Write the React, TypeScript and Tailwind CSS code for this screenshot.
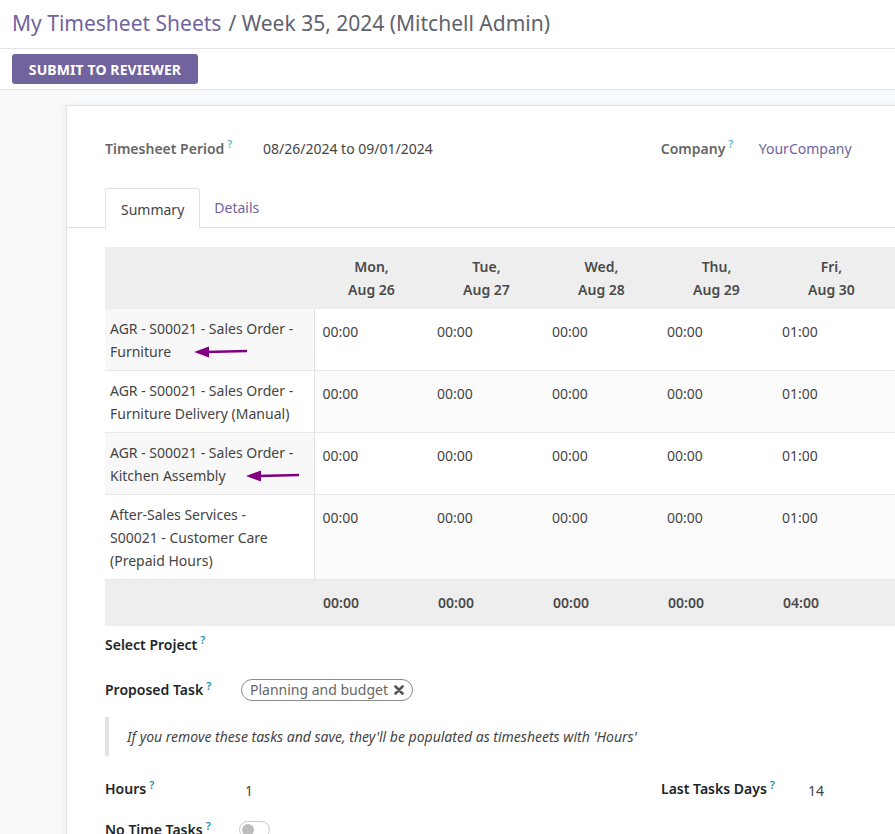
import React from 'react';

const days = [
  ['Mon,', 'Aug 26'],
  ['Tue,', 'Aug 27'],
  ['Wed,', 'Aug 28'],
  ['Thu,', 'Aug 29'],
  ['Fri,', 'Aug 30'],
];

const rows = [
  { name: ['AGR - S00021 - Sales Order -', 'Furniture'], arrow: 'a' },
  { name: ['AGR - S00021 - Sales Order -', 'Furniture Delivery (Manual)'] },
  { name: ['AGR - S00021 - Sales Order -', 'Kitchen Assembly'], arrow: 'b' },
  { name: ['After-Sales Services -', 'S00021 - Customer Care', '(Prepaid Hours)'] },
];

const values = ['00:00', '00:00', '00:00', '00:00', '01:00'];
const totals = ['00:00', '00:00', '00:00', '00:00', '04:00'];

function Help({ light }: { light?: boolean }) {
  return (
    <sup className={`ml-[3px] text-[11px] font-semibold ${light ? 'text-[#5fb6cc]' : 'text-[#2a8fb0]'}`}>?</sup>
  );
}

function Arrow({ width }: { width: number }) {
  return (
    <svg width={width} height="12" viewBox={`0 0 ${width} 12`} className="inline-block">
      <line x1="12" y1="6" x2={width} y2="5" stroke="#800080" strokeWidth="2.5" />
      <polygon points="0,6 15,0.5 15,11.5" fill="#800080" />
    </svg>
  );
}

export default function App() {
  return (
    <div className="h-[834px] overflow-hidden bg-[#f8f9fa] text-[14px] text-[#444]" style={{ fontFamily: '"Noto Sans", "Open Sans", sans-serif' }}>
      <div className="bg-white">
        <div className="h-[49px] border-b border-[#e3e3e3] px-3 flex items-center text-[21px]">
          <span className="text-[#71639e]">My Timesheet Sheets</span>
          <span className="text-[#5f636e] ml-[7px]">/ Week 35, 2024 (Mitchell Admin)</span>
        </div>
        <div className="h-[41px] border-b border-[#e3e3e3] px-3 flex items-center">
          <button className="h-[30px] w-[186px] rounded-[3px] bg-[#71639e] text-white text-[14px] font-bold uppercase tracking-[0.1px]">
            Submit to Reviewer
          </button>
        </div>
      </div>

      <div className="pl-[66px] pt-[15px]">
        <div className="min-w-[900px] bg-white border-l border-t border-[#e0e2e6] shadow-[-2px_0_6px_rgba(0,0,0,0.04)]">
          <div className="pl-[38px] pt-[30px] flex items-center h-[54px]">
            <div className="w-[158px] font-semibold text-[#666]">
              Timesheet Period<Help light />
            </div>
            <div className="text-[#444]">08/26/2024 to 09/01/2024</div>
            <div className="ml-[228px] w-[98px] font-semibold text-[#666]">
              Company<Help light />
            </div>
            <div className="text-[#71639e]">YourCompany</div>
          </div>

          <div className="mt-[28px] border-b border-[#dee2e6] pl-[38px] flex h-[40px]">
            <div className="-mb-px h-[41px] px-[15px] flex items-center border border-b-0 border-[#dee2e6] rounded-t-[3px] bg-white text-[#444]">
              Summary
            </div>
            <div className="px-[14px] flex items-center text-[#71639e]">Details</div>
          </div>

          <div className="pl-[38px] pt-[19px]">
            <table className="border-collapse table-fixed w-[800px]">
              <colgroup>
                <col className="w-[209px]" />
                {days.map((_, i) => (
                  <col key={i} className="w-[115px]" />
                ))}
                <col className="w-[16px]" />
              </colgroup>
              <thead>
                <tr className="bg-[#eeeeee] h-[62px]">
                  <th></th>
                  {days.map((d, i) => (
                    <th key={i} className="text-center font-semibold text-[#4a4a4a] leading-[23px]">
                      {d[0]}
                      <br />
                      {d[1]}
                    </th>
                  ))}
                  <th></th>
                </tr>
              </thead>
              <tbody>
                {rows.map((r, ri) => (
                  <tr key={ri} className="border-b border-[#e8e8e8] last:border-b-0 align-top">
                    <td className={`pt-[8px] pb-[7px] pl-[5px] pr-[4px] leading-[23px] text-[#444] border-r border-[#e2e2e2] ${ri % 2 === 0 ? 'bg-[#f8f8f8]' : 'bg-white'}`}>
                      {r.name.map((l, li) => (
                        <div key={li} className="whitespace-nowrap flex items-center">
                          {l}
                          {li === r.name.length - 1 && r.arrow === 'a' && (
                            <span className="ml-[23px] flex items-center"><Arrow width={53} /></span>
                          )}
                          {li === r.name.length - 1 && r.arrow === 'b' && (
                            <span className="ml-[20px] flex items-center"><Arrow width={53} /></span>
                          )}
                        </div>
                      ))}
                    </td>
                    {values.map((v, vi) => (
                      <td key={vi} className={`pt-[11px] pl-[8px] leading-[23px] text-[#444] ${ri % 2 === 1 ? 'bg-[#fbfbfb]' : 'bg-white'}`}>
                        {v}
                      </td>
                    ))}
                    <td className={ri % 2 === 1 ? 'bg-[#fbfbfb]' : 'bg-white'}></td>
                  </tr>
                ))}
                <tr className="bg-[#eeeeee] h-[46px]">
                  <td></td>
                  {totals.map((t, ti) => (
                    <td key={ti} className="pl-[9px] font-semibold text-[#4a4a4a]">
                      {t}
                    </td>
                  ))}
                  <td></td>
                </tr>
              </tbody>
            </table>

            <div className="h-[29px] flex items-end font-semibold text-[#212529]">
              <div className="leading-[20px]">Select Project<Help /></div>
            </div>
            <div className="mt-[24px] flex items-center h-[22px]">
              <div className="w-[136px] font-semibold text-[#212529]">Proposed Task<Help /></div>
              <div className="h-[22px] rounded-full border border-[#8a8a8a] px-[8px] flex items-center gap-[6px] text-[#666]">
                Planning and budget
                <svg width="10" height="10" viewBox="0 0 10 10">
                  <path d="M1.5 1.5 L8.5 8.5 M8.5 1.5 L1.5 8.5" stroke="#555" strokeWidth="2.6" strokeLinecap="round" />
                </svg>
              </div>
            </div>
            <div className="mt-[16px] h-[39px] border-l-4 border-[#e2e3e5] pl-[18px] flex items-center italic text-[#444]">
              If you remove these tasks and save, they'll be populated as timesheets with 'Hours'
            </div>
            <div className="mt-[22px] flex items-center h-[22px]">
              <div className="w-[140px] font-semibold text-[#212529]">Hours<Help /></div>
              <div className="text-[#444] pt-[4px]">1</div>
              <div className="ml-[408px] w-[147px] font-semibold text-[#212529]">Last Tasks Days<Help /></div>
              <div className="text-[#444] pt-[4px]">14</div>
            </div>
            <div className="mt-[19px] flex items-center h-[22px]">
              <div className="w-[134px] font-semibold text-[#212529]">No Time Tasks<Help /></div>
              <div className="w-[31px] h-[17px] rounded-full border border-[#c8c8c8] bg-white flex items-center px-[2px]">
                <div className="w-[12px] h-[12px] rounded-full bg-[#bdbdbd]"></div>
              </div>
            </div>
            <div className="h-[40px]"></div>
          </div>
        </div>
      </div>
    </div>
  );
}
